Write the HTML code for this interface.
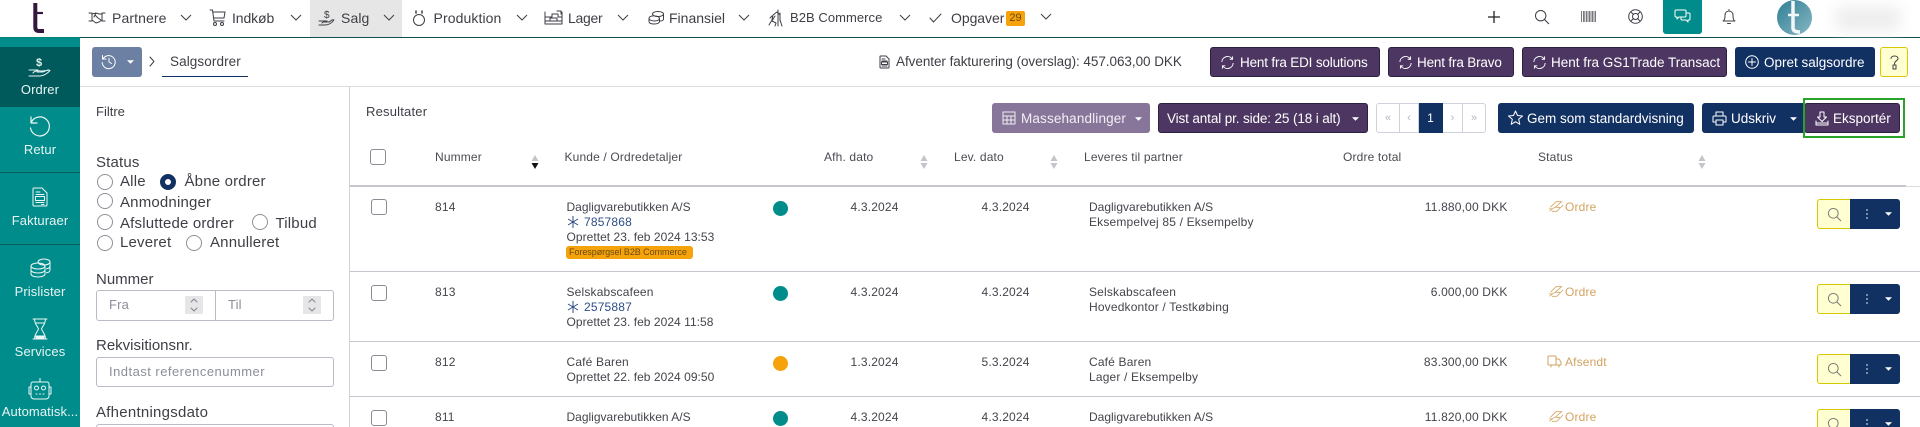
<!DOCTYPE html>
<html lang="da">
<head>
<meta charset="utf-8">
<title>Salgsordrer</title>
<style>
html,body{margin:0;padding:0;background:#fff;overflow:hidden}
#p{position:relative;width:1920px;height:427px;overflow:hidden;background:#fff;font-family:"Liberation Sans",Arial,sans-serif;color:#404048;font-size:12px}
.t{position:absolute;white-space:nowrap;line-height:16px;height:16px}
.n{font-size:14px;color:#3e3e46;top:10px;letter-spacing:.1px}
.b{position:absolute;box-sizing:border-box;height:30px;border-radius:3px;color:#fff;font-size:13.5px;line-height:29px;white-space:nowrap}
.pu{background:#4d3762;border:1px solid #2c2140;border-bottom-width:1.5px}
.na{background:#123163;border-radius:3px}
.b svg,.ic{position:absolute}
.s{position:absolute;fill:none;stroke:#3e3e46;stroke-width:1;stroke-linecap:round;stroke-linejoin:round}
.w{stroke:#fff}
.sl{position:absolute;left:0;width:80px;text-align:center;color:#e8f4f3;font-size:13px;line-height:16px;letter-spacing:.1px}
.l{font-size:15px;color:#3e3e46;letter-spacing:.18px}
.r{position:absolute;box-sizing:border-box;width:16px;height:16px;border:1px solid #8f8f98;border-radius:50%;background:#fff}
.cb{position:absolute;box-sizing:border-box;width:16px;height:16px;border:1px solid #8b8b95;border-radius:3px;background:#fff}
.th{font-size:12px;top:149px;color:#4a4a52;letter-spacing:.15px}
.c{font-size:12px;color:#44444c;letter-spacing:.17px}
.o{letter-spacing:.04px}
.g{letter-spacing:0}
.rl{position:absolute;left:350px;right:0;height:1px;background:#c6c6ce}
.d{position:absolute;width:15px;height:15px;border-radius:50%;left:773px}
.st{font-size:12px;color:#d3a361;letter-spacing:.15px}
.ay{position:absolute;left:1817px;width:33px;height:30px;box-sizing:border-box;background:#ffffd2;border:1px solid #d8c800;border-right:0;border-radius:3px 0 0 3px}
.an{position:absolute;left:1850px;width:50px;height:30px;background:#123163;border-radius:0 3px 3px 0}
.inp{position:absolute;box-sizing:border-box;border:1px solid #b9bcc6;border-radius:3px;background:#fff}
.ph{color:#8c8f99;font-size:13px;letter-spacing:.15px}
.spin{position:absolute;width:18px;height:18px;background:#e6e6e8;border-radius:1px}
.pg{position:absolute;top:103px;height:30px;box-sizing:border-box;border:1px solid #cfd2da;border-left:0;background:#fff;color:#b4b6bf;font-size:11px;text-align:center;line-height:28px}
</style>
</head>
<body>
<div id="p">
<svg width="0" height="0" style="position:absolute">
<defs>
<symbol id="ch" viewBox="0 0 12 8"><path d="M1 1l5 5 5-5" fill="none" stroke="#3e3e46" stroke-width="1"/></symbol>
<symbol id="se" viewBox="0 0 16 16"><circle cx="6.7" cy="6.7" r="5.2" fill="none" stroke="currentColor" stroke-width="1"/><path d="M10.5 10.5l4.5 4.5" stroke="currentColor" stroke-width="1.1" fill="none"/></symbol>
<symbol id="sy" viewBox="0 0 16 16"><path d="M2 7.5A6 6 0 0 1 13 4.3M14 8.5A6 6 0 0 1 3 11.7M13.4 1.5v3h-3M2.6 14.5v-3h3" fill="none" stroke="#fff" stroke-width="1"/></symbol>
<symbol id="so" viewBox="0 0 8 14"><path d="M4 0l3.5 6H.5zM4 14L.5 8h7z" fill="#c4c4ca"/></symbol>
<symbol id="hs" viewBox="0 0 20 14"><path d="M2 13l6-5M5 13h6l8-8M3 8l7-7h7l-8 7h6M1 10h5" fill="none" stroke="#d3a361" stroke-width="1"/></symbol>
<symbol id="dd" viewBox="0 0 8 4"><path d="M0 0h8L4 4z" fill="#fff"/></symbol>
<symbol id="as" viewBox="0 0 12 12"><path d="M6 0v12M1 3l10 6M11 3L1 9" fill="none" stroke="#2d4d85" stroke-width="1"/></symbol>
</defs>
</svg>

<!-- top bar -->
<div style="position:absolute;left:0;top:37px;width:1920px;height:1px;background:#0e4f50"></div>
<div style="position:absolute;left:0;top:37px;width:80px;height:1px;background:#00827f"></div>
<div style="position:absolute;left:310px;top:0;width:92px;height:37px;background:#e6e6e6"></div>
<svg style="position:absolute;left:30px;top:0" width="18" height="36" viewBox="0 0 18 36"><path d="M5.300 3V27Q5.300 31 9 31H14" fill="none" stroke="#33173f" stroke-width="4"/><path d="M5 13H13" fill="none" stroke="#33173f" stroke-width="2.200"/></svg>

<svg class="s" style="left:88px;top:10px" width="18" height="15" viewBox="0 0 18 15"><path d="M1 3h3v8H1M17 3h-3v8h3M4 4l4-1 3 1 3 0M4 10l4 3 3-1 3-2M7 5l3 3 3 2M8 3L6 7"/></svg>
<span class="t n" style="left:112px">Partnere</span>
<svg class="ic" style="left:180px;top:14px" width="12" height="8"><use href="#ch"/></svg>
<svg class="s" style="left:209px;top:9px" width="17" height="18" viewBox="0 0 17 18"><path d="M1 1h2.500l1.500 11h10M4 3h12l-1 6H5"/><circle cx="6" cy="15" r="1.500"/><circle cx="13" cy="15" r="1.500"/></svg>
<span class="t n" style="left:232px;letter-spacing:-.1px">Indkøb</span>
<svg class="ic" style="left:290px;top:14px" width="12" height="8"><use href="#ch"/></svg>
<svg class="s" style="left:318px;top:9px" width="17" height="18" viewBox="0 0 17 18"><path d="M1 12h8M1 16h6c3 0 6-1 9-5-2-1-3 1-5 2H6M4 14c1-2 4-1 7-1"/><text x="6" y="9" font-size="10" fill="#3e3e46" stroke="none" font-family="Liberation Sans">$</text></svg>
<span class="t n" style="left:341px">Salg</span>
<svg class="ic" style="left:383px;top:14px" width="12" height="8"><use href="#ch"/></svg>
<svg class="s" style="left:411px;top:9px" width="16" height="18" viewBox="0 0 16 18"><circle cx="8" cy="11" r="5.500"/><path d="M5 2v2M11 2v2" stroke-width="1.500"/></svg>
<span class="t n" style="left:433.500px">Produktion</span>
<svg class="ic" style="left:516px;top:14px" width="12" height="8"><use href="#ch"/></svg>
<svg class="s" style="left:544px;top:9px" width="19" height="17" viewBox="0 0 19 17"><path d="M1 15V3M18 15V3M1 15h17M1 12h17M1 8h7V5h6v3h4M6 12V9h7v3M13 2h4v3"/></svg>
<span class="t n" style="left:568px;letter-spacing:-.3px">Lager</span>
<svg class="ic" style="left:617px;top:14px" width="12" height="8"><use href="#ch"/></svg>
<svg class="s" style="left:648px;top:10px" width="17" height="16" viewBox="0 0 17 16"><ellipse cx="10" cy="4" rx="5.500" ry="2.500"/><path d="M15.500 4v5c0 1-1 2-3 2M5 6C2.500 6 1 7 1 8.500v3C1 13.500 4 14 6.500 14s5-1 5-2.500v-3C11.500 7 9 6 6.500 6M1 8.500c0 1.500 3 2.500 5.500 2.500s5-1 5-2.500"/></svg>
<span class="t n" style="left:669px;letter-spacing:0">Finansiel</span>
<svg class="ic" style="left:738px;top:14px" width="12" height="8"><use href="#ch"/></svg>
<svg class="s" style="left:768px;top:9px" width="15" height="18" viewBox="0 0 15 18"><path d="M1 16l3-5 1-5 4-3 3 3v5l2 6M10 1v16M12 4v8M7 7l-3 5 4 2-1 3M4 7L2 9"/></svg>
<span class="t n" style="left:790px;font-size:13px;letter-spacing:.05px">B2B Commerce</span>
<svg class="ic" style="left:899px;top:14px" width="12" height="8"><use href="#ch"/></svg>
<svg class="s" style="left:929px;top:13px" width="13" height="10" viewBox="0 0 13 10"><path d="M1 5l3.500 4L12 1"/></svg>
<span class="t n" style="left:951px;letter-spacing:-.05px">Opgaver</span>
<div style="position:absolute;left:1006px;top:11px;width:19px;height:15px;border-radius:2px;background:#f6a30b;color:#6a4a10;font-size:11px;line-height:15px;text-align:center">29</div>
<svg class="ic" style="left:1040px;top:13px" width="12" height="8"><use href="#ch"/></svg>

<svg class="s" style="left:1488px;top:11px;stroke:#222;stroke-width:1.300" width="12" height="12" viewBox="0 0 12 12"><path d="M6 0v12M0 6h12"/></svg>
<svg style="position:absolute;left:1534px;top:9px;color:#3e3e46" width="16" height="16"><use href="#se"/></svg>
<svg style="position:absolute;left:1581px;top:11px" width="15" height="11" viewBox="0 0 15 11"><path d="M.5 0v11M2.500 0v11M3.800 0v11M5.500 0v11M7 0v11M8.500 0v11M10 0v11M11.500 0v11M13 0v11M14.500 0v11" stroke="#6a6a70" stroke-width=".9"/></svg>
<svg class="s" style="left:1628px;top:9px" width="15" height="15" viewBox="0 0 15 15"><circle cx="7.500" cy="7.500" r="6.800"/><circle cx="7.500" cy="7.500" r="3"/><path d="M3 3l2.500 2.500M12 3L9.500 5.500M3 12l2.500-2.500M12 12L9.500 9.500"/></svg>
<div style="position:absolute;left:1663px;top:0;width:39px;height:34px;background:#008c8a;border-radius:0 0 3px 3px"></div>
<svg class="s w" style="left:1674px;top:9px" width="17" height="15" viewBox="0 0 17 15"><path d="M2 1h9a1 1 0 0 1 1 1v5a1 1 0 0 1-1 1H5L3 10V8H2a1 1 0 0 1-1-1V2a1 1 0 0 1 1-1zM12 4h3a1 1 0 0 1 1 1v5a1 1 0 0 1-1 1h-1v2l-2-2H8a1 1 0 0 1-1-1V8"/></svg>
<svg class="s" style="left:1722px;top:9px" width="14" height="16" viewBox="0 0 14 16"><path d="M1 12c1.500-1 2-2 2-6a4 4 0 0 1 8 0c0 4 .5 5 2 6zM5.500 14.500h3M7 1V.5"/></svg>
<div style="position:absolute;left:1777px;top:0;width:35px;height:35px;border-radius:50%;background:linear-gradient(135deg,#2f7f95,#86b7c2)"></div>
<svg style="position:absolute;left:1785px;top:0" width="18" height="34" viewBox="0 0 18 34"><path d="M8 1V28Q8 32 15 32" fill="none" stroke="#f3f7f8" stroke-width="3.500"/><path d="M3 15H14" fill="none" stroke="#f3f7f8" stroke-width="2.500"/></svg>
<div style="position:absolute;left:1835px;top:6px;width:66px;height:25px;background:#eee;filter:blur(7px);border-radius:8px"></div>

<!-- sidebar -->
<div style="position:absolute;left:0;top:38px;width:80px;height:389px;background:#008c8a"></div>
<div style="position:absolute;left:0;top:47px;width:80px;height:60px;background:#005a5b"></div>
<div style="position:absolute;left:0;top:172px;width:80px;height:1px;background:#006063"></div>
<div style="position:absolute;left:0;top:244px;width:80px;height:1px;background:#006063"></div>

<svg class="s" style="left:28px;top:57px;stroke:#e6f3f2" width="24" height="21" viewBox="0 0 24 21"><path d="M1 13h9M1 19h11c3 0 7-2 10-5.500-2-1.500-4 .5-7 1.500H9M5 16c2-3 6-2 9-2 2 0 3-.5 3-.5"/><text x="8" y="9" font-size="11" fill="#e6f3f2" stroke="none" font-family="Liberation Sans" font-weight="bold">$</text></svg>
<div class="sl" style="top:82px">Ordrer</div>
<svg class="s" style="left:29px;top:116px;stroke:#eef7f6;stroke-width:1.200" width="22" height="22" viewBox="0 0 22 22"><path d="M2 7a9.500 9.500 0 1 1-.5 5M2 1v6h6"/></svg>
<div class="sl" style="top:142px">Retur</div>
<svg class="s" style="left:32px;top:187px;stroke:#eef7f6" width="16" height="20" viewBox="0 0 16 20"><path d="M1 2a1 1 0 0 1 1-1h8l5 5v12a1 1 0 0 1-1 1H2a1 1 0 0 1-1-1zM4 5h4M4 7.500h8M4 15.500h8M9.500 17.500H12"/><rect x="3.500" y="9.500" width="9" height="4"/></svg>
<div class="sl" style="top:213px">Fakturaer</div>
<svg class="s" style="left:30px;top:258px;stroke:#eef7f6" width="21" height="20" viewBox="0 0 21 20"><ellipse cx="14" cy="4" rx="6" ry="3"/><path d="M20 4v8c0 1.500-1.500 2.500-3.500 2.800M20 8c0 1.500-1.500 2.500-3.500 2.800"/><ellipse cx="8" cy="8" rx="7" ry="3"/><path d="M1 8v8c0 1.700 3 3 7 3s7-1.300 7-3V8M1 12c0 1.700 3 3 7 3s7-1.300 7-3"/></svg>
<div class="sl" style="top:284px">Prislister</div>
<svg class="s" style="left:32px;top:318px;stroke:#eef7f6" width="16" height="22" viewBox="0 0 16 22"><path d="M1 1h14M1 21h14M2.500 1c0 5 3 7 4 10-1 3-4 5-4 10M13.500 1c0 5-3 7-4 10 1 3 4 5 4 10"/><path d="M4 5h8M4 18h8v2H4z" fill="#eef7f6"/></svg>
<div class="sl" style="top:344px">Services</div>
<svg class="s" style="left:28px;top:378px;stroke:#eef7f6" width="24" height="22" viewBox="0 0 24 22"><path d="M12 0v4M5 4h14a2 2 0 0 1 2 2v12a3 3 0 0 1-3 3H6a3 3 0 0 1-3-3V6a2 2 0 0 1 2-2zM3 9H1v7h2M21 9h2v7h-2"/><circle cx="8.500" cy="10" r="2"/><circle cx="15.500" cy="10" r="2"/><path d="M8 16h1M11.500 16h1M15 16h1"/></svg>
<div class="sl" style="top:404px">Automatisk...</div>

<!-- breadcrumb bar -->
<div style="position:absolute;left:92px;top:47px;width:50px;height:30px;border-radius:3px;background:#6b80a2"></div>
<svg class="s w" style="left:101px;top:54px" width="16" height="16" viewBox="0 0 16 16"><path d="M2 5a6.500 6.500 0 1 1-.8 3.500M1.500 1.500V5H5M8 4.500V8l2.500 1.500"/></svg>
<svg style="position:absolute;left:127px;top:60px" width="7" height="4"><use href="#dd"/></svg>
<svg class="s" style="left:149px;top:56px" width="6" height="11" viewBox="0 0 6 11"><path d="M1 1l4 4.500L1 10"/></svg>
<span class="t" style="left:170px;top:54px;font-size:13.500px;color:#3e3e46;letter-spacing:.1px">Salgsordrer</span>
<div style="position:absolute;left:162px;top:76px;width:86px;height:1px;background:#123163"></div>
<div style="position:absolute;left:80px;top:86px;right:0;height:1px;background:#dcdcdf"></div>
<div style="position:absolute;left:349px;top:87px;width:1px;height:340px;background:#d0d0d6"></div>

<svg class="s" style="left:879px;top:55px" width="11" height="14" viewBox="0 0 11 14"><path d="M1 1.500a.5.500 0 0 1 .5-.5H7l3 3v8.500a.5.500 0 0 1-.5.500h-8a.5.500 0 0 1-.5-.5zM3 4h3M3 6h5M3 11h5"/><rect x="2.500" y="7" width="6" height="2.500"/></svg>
<span class="t" style="left:896px;top:54px;font-size:13.5px;color:#3e3e46;letter-spacing:-.05px">Afventer fakturering (overslag): 457.063,00 DKK</span>

<div class="b pu" style="left:1210px;top:47px;width:170px;padding-left:29px;letter-spacing:-.17px">Hent fra EDI solutions<svg style="left:9px;top:7px" width="15" height="15"><use href="#sy"/></svg></div>
<div class="b pu" style="left:1388px;top:47px;width:126px;padding-left:28px;letter-spacing:-.17px">Hent fra Bravo<svg style="left:9px;top:7px" width="15" height="15"><use href="#sy"/></svg></div>
<div class="b pu" style="left:1522px;top:47px;width:205px;padding-left:28px">Hent fra GS1Trade Transact<svg style="left:9px;top:7px" width="15" height="15"><use href="#sy"/></svg></div>
<div class="b na" style="left:1735px;top:47px;width:140px;padding-left:29px;line-height:31px">Opret salgsordre<svg class="s w" style="left:10px;top:8px" width="14" height="14" viewBox="0 0 14 14"><circle cx="7" cy="7" r="6.300"/><path d="M7 3.500v7M3.500 7h7"/></svg></div>
<div class="b" style="left:1880px;top:47px;width:28px;background:#ffffd2;border:1px solid #d8c800"><svg class="s" style="left:8px;top:7px" width="11" height="15" viewBox="0 0 11 15"><path d="M2 3.500C2 2 3.500 1 5.500 1S9 2 9 3.500 7 6 6.500 6.500 5.500 7.500 5.500 9M4 10h3v4H4z"/></svg></div>

<!-- filters -->
<span class="t" style="left:96px;top:104px;font-size:13px;color:#3e3e46">Filtre</span>
<span class="t l" style="left:96px;top:155px">Status</span>
<div class="r" style="left:96.500px;top:174px"></div><span class="t l" style="left:120px;top:174px">Alle</span>
<div class="r" style="left:160px;top:174px;border:5px solid #123163"></div><span class="t l" style="left:184.500px;top:174px">Åbne ordrer</span>
<div class="r" style="left:96.500px;top:193px"></div><span class="t l" style="left:120px;top:195px">Anmodninger</span>
<div class="r" style="left:96.500px;top:214px"></div><span class="t l" style="left:120px;top:216px">Afsluttede ordrer</span>
<div class="r" style="left:252px;top:214px"></div><span class="t l" style="left:275.500px;top:216px">Tilbud</span>
<div class="r" style="left:96.500px;top:235px"></div><span class="t l" style="left:120px;top:235px">Leveret</span>
<div class="r" style="left:186px;top:235px"></div><span class="t l" style="left:210px;top:235px">Annulleret</span>

<span class="t l" style="left:96px;top:272px;letter-spacing:0">Nummer</span>
<div class="inp" style="left:96px;top:290px;width:238px;height:31px"></div>
<div style="position:absolute;left:215px;top:290px;width:1px;height:31px;background:#b9bcc6"></div>
<span class="t ph" style="left:109px;top:297px">Fra</span>
<div class="spin" style="left:185px;top:296px"></div>
<svg class="s" style="left:190px;top:298px;stroke:#85858c" width="8" height="14" viewBox="0 0 8 14"><path d="M1 4l3-3 3 3M1 10l3 3 3-3"/></svg>
<span class="t ph" style="left:228px;top:297px">Til</span>
<div class="spin" style="left:303px;top:296px"></div>
<svg class="s" style="left:308px;top:298px;stroke:#85858c" width="8" height="14" viewBox="0 0 8 14"><path d="M1 4l3-3 3 3M1 10l3 3 3-3"/></svg>

<span class="t l" style="left:96px;top:338px;letter-spacing:0">Rekvisitionsnr.</span>
<div class="inp" style="left:96px;top:357px;width:238px;height:30px"></div>
<span class="t ph" style="left:109px;top:364px;letter-spacing:.47px">Indtast referencenummer</span>
<span class="t l" style="left:96px;top:405px;letter-spacing:.25px">Afhentningsdato</span>
<div class="inp" style="left:96px;top:424px;width:238px;height:3px;border-bottom:0;border-radius:3px 3px 0 0"></div>

<!-- results toolbar -->
<span class="t" style="left:366px;top:104px;font-size:13px;color:#3e3e46;letter-spacing:.2px">Resultater</span>
<div class="b" style="left:992px;top:103px;width:158px;background:#87769a;padding-left:29px;line-height:31px;color:#f2eff5;letter-spacing:.15px">Massehandlinger<svg class="s" style="left:10px;top:8px;stroke:#eee" width="14" height="14" viewBox="0 0 14 14"><path d="M1 1h12v12H1zM1 5h12M1 9h12M5 5v8M9 5v8"/></svg><svg style="left:143px;top:14px" width="7" height="4"><use href="#dd"/></svg></div>
<div class="b pu" style="left:1158px;top:103px;width:210px;padding-left:8px;letter-spacing:-.12px">Vist antal pr. side: 25 (18 i alt)<svg style="left:193px;top:13px" width="7" height="4"><use href="#dd"/></svg></div>
<div class="pg" style="left:1376px;width:24px;border-left:1px solid #cfd2da;border-radius:3px 0 0 3px">«</div>
<div class="pg" style="left:1400px;width:19px">‹</div>
<div class="pg" style="left:1419px;width:24px;background:#123163;border-color:#123163;color:#fff;font-size:12px">1</div>
<div class="pg" style="left:1443px;width:20px">›</div>
<div class="pg" style="left:1463px;width:23px;border-radius:0 3px 3px 0">»</div>
<div class="b na" style="left:1498px;top:103px;width:195.500px;padding-left:29px;line-height:31px">Gem som standardvisning<svg class="s w" style="left:10px;top:7px" width="15" height="15" viewBox="0 0 15 15"><path d="M7.500 1l2 4.500 5 .5-3.800 3.300 1.100 5-4.300-2.600-4.300 2.600 1.100-5L.5 6l5-.5z"/></svg></div>
<div class="b na" style="left:1702px;top:103px;width:104px;padding-left:29px;line-height:31px">Udskriv<svg class="s w" style="left:10px;top:8px" width="15" height="15" viewBox="0 0 15 15"><path d="M4 5V1h7v4M1 11V6a1 1 0 0 1 1-1h11a1 1 0 0 1 1 1v5h-3M4 11H1M4 9h7v5H4z"/></svg><svg style="left:88px;top:14px" width="7" height="4"><use href="#dd"/></svg></div>
<div class="b pu" style="left:1804px;top:103px;width:96px;padding-left:28px">Eksportér<svg class="s w" style="left:10px;top:7px" width="14" height="15" viewBox="0 0 14 15"><path d="M5 1h4v5h2.500L7 10.500 2.500 6H5zM1 10v4h12v-4M1 12h12"/></svg></div>
<div style="position:absolute;left:1802.500px;top:98px;width:102px;height:40px;box-sizing:border-box;border:2px solid #2ba32b"></div>

<!-- table head -->
<div class="cb" style="left:370px;top:149px"></div>
<span class="t th" style="left:435px">Nummer</span>
<svg style="position:absolute;left:531px;top:155px" width="8" height="14"><path d="M4 0l3.500 6H.5z" fill="#c4c4ca"/><path d="M4 14L.5 8h7z" fill="#111"/></svg>
<span class="t th" style="left:564.500px">Kunde / Ordredetaljer</span>
<span class="t th" style="left:824px">Afh. dato</span>
<svg style="position:absolute;left:920px;top:155px" width="8" height="14"><use href="#so"/></svg>
<span class="t th" style="left:954px">Lev. dato</span>
<svg style="position:absolute;left:1050px;top:155px" width="8" height="14"><use href="#so"/></svg>
<span class="t th" style="left:1084px">Leveres til partner</span>
<span class="t th" style="left:1343px">Ordre total</span>
<span class="t th" style="left:1538px">Status</span>
<svg style="position:absolute;left:1698px;top:155px" width="8" height="14"><use href="#so"/></svg>
<div style="position:absolute;left:350px;top:185px;width:1556px;height:2px;background:#c6c6ce"></div>
<div style="position:absolute;left:1906px;top:186px;width:14px;height:1px;background:#dcdcdf"></div>

<div class="rl" style="top:271px"></div>
<div class="rl" style="top:341px"></div>
<div class="rl" style="top:396px"></div>

<!-- row 814 -->
<div class="cb" style="left:370.500px;top:199px"></div>
<span class="t c" style="left:435px;top:199px">814</span>
<span class="t c g" style="left:566.500px;top:199px">Dagligvarebutikken A/S</span>
<svg style="position:absolute;left:567px;top:216px" width="12" height="12"><use href="#as"/></svg>
<span class="t c" style="left:584px;top:214px;color:#2d4d85">7857868</span>
<span class="t c o" style="left:566.500px;top:229px">Oprettet 23. feb 2024 13:53</span>
<div style="position:absolute;left:566px;top:246px;width:127px;height:13px;border-radius:3px;background:#f6a30b;color:#6a4a10;font-size:9px;line-height:13px;padding-left:3px;box-sizing:border-box;white-space:nowrap;letter-spacing:-.05px">Forespørgsel B2B Commerce</div>
<div class="d" style="top:201px;background:#008c8a"></div>
<span class="t c" style="left:850.500px;top:199px">4.3.2024</span>
<span class="t c" style="left:981.500px;top:199px">4.3.2024</span>
<span class="t c g" style="left:1089px;top:199px">Dagligvarebutikken A/S</span>
<span class="t c" style="left:1089px;top:214px">Eksempelvej 85 / Eksempelby</span>
<span class="t c" style="right:412.500px;top:199px">11.880,00 DKK</span>
<svg style="position:absolute;left:1548px;top:200px" width="16" height="13"><use href="#hs"/></svg>
<span class="t st" style="left:1565px;top:199px">Ordre</span>
<div class="ay" style="top:199px;color:#777"><svg style="position:absolute;left:9px;top:7px" width="15" height="15"><use href="#se"/></svg></div>
<div class="an" style="top:199px"><svg style="position:absolute;left:16px;top:10px" width="2" height="10"><path d="M1 0v2M1 4v2M1 8v2" stroke="#e8e8e8"/></svg><svg style="position:absolute;left:34.500px;top:13px" width="7" height="4"><use href="#dd"/></svg></div>

<!-- row 813 -->
<div class="cb" style="left:370.500px;top:285px"></div>
<span class="t c" style="left:435px;top:284px">813</span>
<span class="t c" style="left:566.500px;top:284px">Selskabscafeen</span>
<svg style="position:absolute;left:567px;top:301px" width="12" height="12"><use href="#as"/></svg>
<span class="t c" style="left:584px;top:299px;color:#2d4d85">2575887</span>
<span class="t c o" style="left:566.500px;top:314px">Oprettet 23. feb 2024 11:58</span>
<div class="d" style="top:286px;background:#008c8a"></div>
<span class="t c" style="left:850.500px;top:284px">4.3.2024</span>
<span class="t c" style="left:981.500px;top:284px">4.3.2024</span>
<span class="t c" style="left:1089px;top:284px">Selskabscafeen</span>
<span class="t c" style="left:1089px;top:299px">Hovedkontor / Testkøbing</span>
<span class="t c" style="right:412.500px;top:284px">6.000,00 DKK</span>
<svg style="position:absolute;left:1548px;top:285px" width="16" height="13"><use href="#hs"/></svg>
<span class="t st" style="left:1565px;top:284px">Ordre</span>
<div class="ay" style="top:284px;color:#777"><svg style="position:absolute;left:9px;top:7px" width="15" height="15"><use href="#se"/></svg></div>
<div class="an" style="top:284px"><svg style="position:absolute;left:16px;top:10px" width="2" height="10"><path d="M1 0v2M1 4v2M1 8v2" stroke="#e8e8e8"/></svg><svg style="position:absolute;left:34.500px;top:13px" width="7" height="4"><use href="#dd"/></svg></div>

<!-- row 812 -->
<div class="cb" style="left:370.500px;top:355px"></div>
<span class="t c" style="left:435px;top:354px">812</span>
<span class="t c" style="left:566.500px;top:354px">Café Baren</span>
<span class="t c o" style="left:566.500px;top:369px">Oprettet 22. feb 2024 09:50</span>
<div class="d" style="top:356px;background:#f6a30b"></div>
<span class="t c" style="left:850.500px;top:354px">1.3.2024</span>
<span class="t c" style="left:981.500px;top:354px">5.3.2024</span>
<span class="t c" style="left:1089px;top:354px">Café Baren</span>
<span class="t c" style="left:1089px;top:369px">Lager / Eksempelby</span>
<span class="t c" style="right:412.500px;top:354px">83.300,00 DKK</span>
<svg class="s" style="left:1547px;top:355px;stroke:#d3a361" width="15" height="13" viewBox="0 0 15 13"><path d="M2 1h6a1 1 0 0 1 1 1v8H2a1 1 0 0 1-1-1V2a1 1 0 0 1 1-1zM9 4h3l2 3v3H9M4 10v2M12 10v2"/></svg>
<span class="t st" style="left:1565px;top:354px">Afsendt</span>
<div class="ay" style="top:354px;color:#777"><svg style="position:absolute;left:9px;top:7px" width="15" height="15"><use href="#se"/></svg></div>
<div class="an" style="top:354px"><svg style="position:absolute;left:16px;top:10px" width="2" height="10"><path d="M1 0v2M1 4v2M1 8v2" stroke="#e8e8e8"/></svg><svg style="position:absolute;left:34.500px;top:13px" width="7" height="4"><use href="#dd"/></svg></div>

<!-- row 811 -->
<div class="cb" style="left:370.500px;top:410px"></div>
<span class="t c" style="left:435px;top:409px">811</span>
<span class="t c g" style="left:566.500px;top:409px">Dagligvarebutikken A/S</span>
<div class="d" style="top:411px;background:#008c8a;height:15px"></div>
<span class="t c" style="left:850.500px;top:409px">4.3.2024</span>
<span class="t c" style="left:981.500px;top:409px">4.3.2024</span>
<span class="t c g" style="left:1089px;top:409px">Dagligvarebutikken A/S</span>
<span class="t c" style="right:412.500px;top:409px">11.820,00 DKK</span>
<svg style="position:absolute;left:1548px;top:410px" width="16" height="13"><use href="#hs"/></svg>
<span class="t st" style="left:1565px;top:409px">Ordre</span>
<div class="ay" style="top:409px;height:18px;border-bottom:0;border-radius:3px 0 0 0;color:#777"><svg style="position:absolute;left:9px;top:7px" width="15" height="11" viewBox="0 0 15 11"><use href="#se" width="15" height="15"/></svg></div>
<div class="an" style="top:409px;height:18px;border-radius:0 3px 0 0"><svg style="position:absolute;left:16px;top:10px" width="2" height="8"><path d="M1 0v2M1 4v2" stroke="#e8e8e8"/></svg><svg style="position:absolute;left:34.500px;top:13px" width="7" height="4"><use href="#dd"/></svg></div>
</div>
</body>
</html>
